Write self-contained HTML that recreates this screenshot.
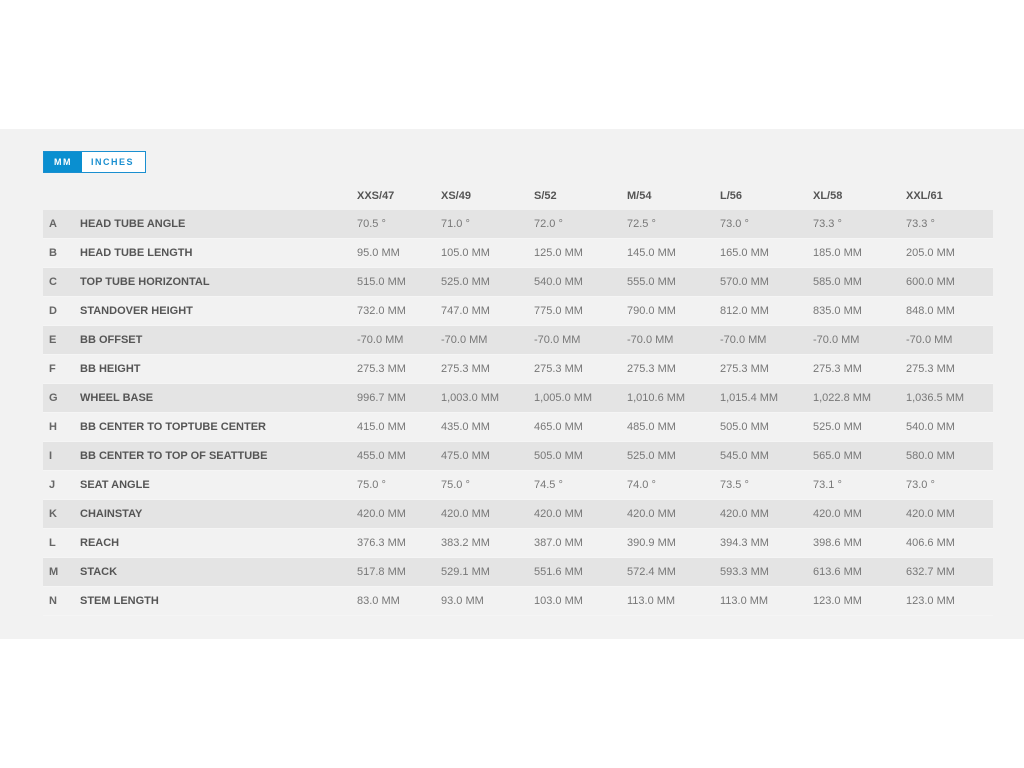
<!DOCTYPE html>
<html><head><style>
body{margin:0;width:1024px;height:768px;background:#fff;font-family:"Liberation Sans",sans-serif;position:relative;overflow:hidden}
.panel{position:absolute;left:0;top:129px;width:1024px;height:510px;background:#f2f2f2}
.tog{position:absolute;left:43px;top:151px;width:101px;height:20px;border:1px solid #1a8fd0;background:#fff;box-sizing:content-box}
.tog span{position:absolute;top:0;height:20px;line-height:20px;font-size:9px;font-weight:bold;letter-spacing:1.5px}
.mm{left:0;width:38px;background:#0a8fd0;color:#fff;text-align:center}
.in{left:47px;color:#1a8fd0}
table{position:absolute;left:43px;top:182px;width:950px;border-collapse:collapse;font-size:11px}
td{height:28px;padding:0;border-bottom:1px solid #f5f5f5;color:#777;white-space:nowrap}
tr.h td{color:#555;font-weight:bold;height:28px;border:0}
tr:nth-child(even) td{background:#e4e4e4}
td.l{width:31px;padding-left:6px;color:#666;font-weight:bold}
td.n{width:277px;color:#555;font-weight:bold}
td.c{width:84px}
td.c2{width:93px}
</style></head><body>
<div class="panel"></div>
<div class="tog"><span class="mm">MM</span><span class="in">INCHES</span></div>
<table>
<tr class="h"><td class="l"></td><td class="n"></td><td class="c">XXS/47</td><td class="c2">XS/49</td><td class="c2">S/52</td><td class="c2">M/54</td><td class="c2">L/56</td><td class="c2">XL/58</td><td>XXL/61</td></tr>
<tr><td class="l">A</td><td class="n">HEAD TUBE ANGLE</td><td>70.5 °</td><td>71.0 °</td><td>72.0 °</td><td>72.5 °</td><td>73.0 °</td><td>73.3 °</td><td>73.3 °</td></tr>
<tr><td class="l">B</td><td class="n">HEAD TUBE LENGTH</td><td>95.0 MM</td><td>105.0 MM</td><td>125.0 MM</td><td>145.0 MM</td><td>165.0 MM</td><td>185.0 MM</td><td>205.0 MM</td></tr>
<tr><td class="l">C</td><td class="n">TOP TUBE HORIZONTAL</td><td>515.0 MM</td><td>525.0 MM</td><td>540.0 MM</td><td>555.0 MM</td><td>570.0 MM</td><td>585.0 MM</td><td>600.0 MM</td></tr>
<tr><td class="l">D</td><td class="n">STANDOVER HEIGHT</td><td>732.0 MM</td><td>747.0 MM</td><td>775.0 MM</td><td>790.0 MM</td><td>812.0 MM</td><td>835.0 MM</td><td>848.0 MM</td></tr>
<tr><td class="l">E</td><td class="n">BB OFFSET</td><td>-70.0 MM</td><td>-70.0 MM</td><td>-70.0 MM</td><td>-70.0 MM</td><td>-70.0 MM</td><td>-70.0 MM</td><td>-70.0 MM</td></tr>
<tr><td class="l">F</td><td class="n">BB HEIGHT</td><td>275.3 MM</td><td>275.3 MM</td><td>275.3 MM</td><td>275.3 MM</td><td>275.3 MM</td><td>275.3 MM</td><td>275.3 MM</td></tr>
<tr><td class="l">G</td><td class="n">WHEEL BASE</td><td>996.7 MM</td><td>1,003.0 MM</td><td>1,005.0 MM</td><td>1,010.6 MM</td><td>1,015.4 MM</td><td>1,022.8 MM</td><td>1,036.5 MM</td></tr>
<tr><td class="l">H</td><td class="n">BB CENTER TO TOPTUBE CENTER</td><td>415.0 MM</td><td>435.0 MM</td><td>465.0 MM</td><td>485.0 MM</td><td>505.0 MM</td><td>525.0 MM</td><td>540.0 MM</td></tr>
<tr><td class="l">I</td><td class="n">BB CENTER TO TOP OF SEATTUBE</td><td>455.0 MM</td><td>475.0 MM</td><td>505.0 MM</td><td>525.0 MM</td><td>545.0 MM</td><td>565.0 MM</td><td>580.0 MM</td></tr>
<tr><td class="l">J</td><td class="n">SEAT ANGLE</td><td>75.0 °</td><td>75.0 °</td><td>74.5 °</td><td>74.0 °</td><td>73.5 °</td><td>73.1 °</td><td>73.0 °</td></tr>
<tr><td class="l">K</td><td class="n">CHAINSTAY</td><td>420.0 MM</td><td>420.0 MM</td><td>420.0 MM</td><td>420.0 MM</td><td>420.0 MM</td><td>420.0 MM</td><td>420.0 MM</td></tr>
<tr><td class="l">L</td><td class="n">REACH</td><td>376.3 MM</td><td>383.2 MM</td><td>387.0 MM</td><td>390.9 MM</td><td>394.3 MM</td><td>398.6 MM</td><td>406.6 MM</td></tr>
<tr><td class="l">M</td><td class="n">STACK</td><td>517.8 MM</td><td>529.1 MM</td><td>551.6 MM</td><td>572.4 MM</td><td>593.3 MM</td><td>613.6 MM</td><td>632.7 MM</td></tr>
<tr><td class="l">N</td><td class="n">STEM LENGTH</td><td>83.0 MM</td><td>93.0 MM</td><td>103.0 MM</td><td>113.0 MM</td><td>113.0 MM</td><td>123.0 MM</td><td>123.0 MM</td></tr>
</table>
</body></html>
